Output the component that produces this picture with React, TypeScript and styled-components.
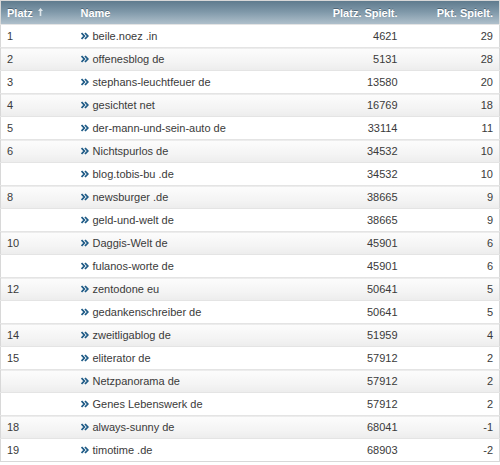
import React from "react";
import styled, { createGlobalStyle } from "styled-components";

const Global = createGlobalStyle`
  html, body { margin: 0; padding: 0; background: #fff; }
  body { font-family: "Liberation Sans", Arial, sans-serif; }
`;

const Table = styled.table`
  width: 499px;
  border-collapse: collapse;
  border: 1px solid #d8d8d8;
  font-family: "Liberation Sans", Arial, sans-serif;
  font-size: 11px;
  color: #3a3a3a;
  table-layout: fixed;
`;

const HeadRow = styled.tr`
  height: 24px;
  background: linear-gradient(to bottom, #5f7b8e 0%, #7f98a9 45%, #b3c3ce 100%);
`;

const Th = styled.th<{ $align?: "left" | "right" }>`
  text-align: ${(p) => p.$align || "left"};
  color: #fff;
  font-weight: bold;
  font-size: 11px;
  padding: 0 6px;
  text-shadow: 0 -1px 0 rgba(40, 60, 75, 0.5);
  white-space: nowrap;
`;

const SortIcon = styled.svg`
  display: inline-block;
  vertical-align: middle;
  margin-left: 5px;
  margin-top: -3px;
`;

const Row = styled.tr<{ $shade: boolean }>`
  height: 23px;
  background: ${(p) =>
    p.$shade ? "linear-gradient(to bottom, #fcfcfc 0%, #f4f4f4 60%, #ececec 100%)" : "#fff"};
  border-top: 1px solid #e4e4e4;
`;

const Td = styled.td<{ $align?: "left" | "right" }>`
  text-align: ${(p) => p.$align || "left"};
  padding: 0 6px;
  white-space: nowrap;
  overflow: hidden;
`;

const NameCell = styled(Td)`
  padding-left: 6px;
`;

const Arrow = styled.svg`
  display: inline-block;
  vertical-align: middle;
  margin-right: 4px;
  margin-top: -2px;
`;

const data: [string, string, number, number][] = [
  ["1", "beile.noez .in", 4621, 29],
  ["2", "offenesblog de", 5131, 28],
  ["3", "stephans-leuchtfeuer de", 13580, 20],
  ["4", "gesichtet net", 16769, 18],
  ["5", "der-mann-und-sein-auto de", 33114, 11],
  ["6", "Nichtspurlos de", 34532, 10],
  ["", "blog.tobis-bu .de", 34532, 10],
  ["8", "newsburger .de", 38665, 9],
  ["", "geld-und-welt de", 38665, 9],
  ["10", "Daggis-Welt de", 45901, 6],
  ["", "fulanos-worte de", 45901, 6],
  ["12", "zentodone eu", 50641, 5],
  ["", "gedankenschreiber de", 50641, 5],
  ["14", "zweitligablog de", 51959, 4],
  ["15", "eliterator de", 57912, 2],
  ["", "Netzpanorama de", 57912, 2],
  ["", "Genes Lebenswerk de", 57912, 2],
  ["18", "always-sunny de", 68041, -1],
  ["19", "timotime .de", 68903, -2],
];

const DoubleArrow = () => (
  <Arrow width="8" height="8" viewBox="0 0 8 8">
    <path d="M0.5 1 L3.3 4 L0.5 7 M4 1 L6.8 4 L4 7" fill="none" stroke="#1d5a86" strokeWidth="1.8" />
  </Arrow>
);

export default function App() {
  return (
    <>
      <Global />
      <Table>
        <colgroup>
          <col style={{ width: 74 }} />
          <col style={{ width: 220 }} />
          <col style={{ width: 109 }} />
          <col style={{ width: 96 }} />
        </colgroup>
        <thead>
          <HeadRow>
            <Th>
              Platz
              <SortIcon width="5" height="8" viewBox="0 0 5 8">
                <path d="M2.5 0 L5 3 L3.3 3 L3.3 8 L1.7 8 L1.7 3 L0 3 Z" fill="#dfe6ea" />
              </SortIcon>
            </Th>
            <Th>Name</Th>
            <Th $align="right">Platz. Spielt.</Th>
            <Th $align="right">Pkt. Spielt.</Th>
          </HeadRow>
        </thead>
        <tbody>
          {data.map(([platz, name, a, b], i) => (
            <Row key={i} $shade={i % 2 === 1}>
              <Td>{platz}</Td>
              <NameCell>
                <DoubleArrow />
                {name}
              </NameCell>
              <Td $align="right">{a}</Td>
              <Td $align="right">{b}</Td>
            </Row>
          ))}
        </tbody>
      </Table>
    </>
  );
}
